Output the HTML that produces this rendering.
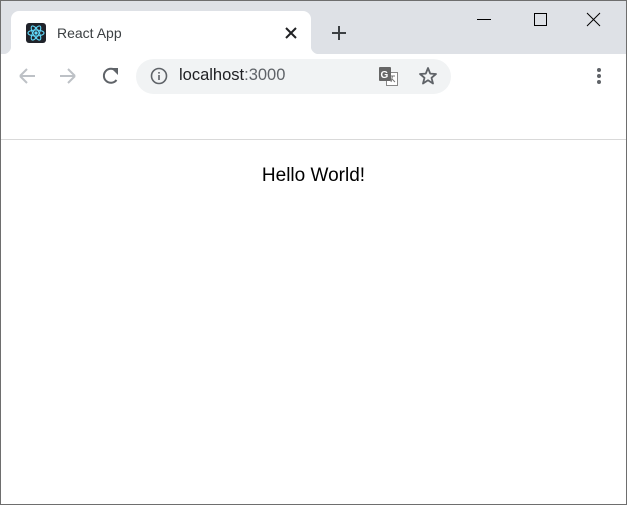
<!DOCTYPE html>
<html><head><style>
*{margin:0;padding:0;box-sizing:border-box}
body{width:627px;height:505px;overflow:hidden;background:#fff;font-family:"Liberation Sans","DejaVu Sans",sans-serif;position:relative}
.frame{position:absolute;left:0;top:0;width:627px;height:505px;border:1px solid #6e6e6e;pointer-events:none}
.top{position:absolute;left:0;top:0;width:627px;height:54px;background:#dee1e6}
.tab{position:absolute;left:11px;top:11px;width:300px;height:43px;background:#fff;border-radius:8px 8px 0 0}
.tab:before,.tab:after{content:"";position:absolute;bottom:0;width:8px;height:8px}
.tab:before{left:-8px;background:radial-gradient(circle at 0 0,#dee1e6 8px,#fff 8.5px)}
.tab:after{right:-8px;background:radial-gradient(circle at 100% 0,#dee1e6 8px,#fff 8.5px)}
.title{position:absolute;left:57px;top:25px;font-size:14px;color:#3c4043}
.addr{position:absolute;left:136px;top:59px;width:315px;height:35px;background:#f1f3f4;border-radius:18px}
.url{position:absolute;left:179px;top:66px;font-size:16.5px;color:#202124}
.url span{color:#5f6368}
.sep{position:absolute;left:0;top:139px;width:627px;height:1px;background:#d9d9d9}
.hello{position:absolute;left:0;width:627px;top:165px;text-align:center;font-size:19px;color:#000}
svg{position:absolute}
</style></head><body>
<div class="top"></div>
<div class="tab"></div>
<svg style="left:26px;top:23px" width="20" height="20" viewBox="0 0 20 20"><rect width="20" height="20" rx="3" fill="#20232a"/><g fill="none" stroke="#61dafb" stroke-width="1.1"><ellipse cx="10" cy="10" rx="8" ry="3"/><ellipse cx="10" cy="10" rx="8" ry="3" transform="rotate(60 10 10)"/><ellipse cx="10" cy="10" rx="8" ry="3" transform="rotate(120 10 10)"/></g><circle cx="10" cy="10" r="1.6" fill="#61dafb"/></svg>
<div class="title">React App</div>
<svg style="left:285px;top:27px" width="12" height="12"><path d="M1 1L11 11M11 1L1 11" stroke="#202124" stroke-width="2"/></svg>
<svg style="left:331px;top:25px" width="16" height="16"><path d="M8 1V15M1 8H15" stroke="#3c4043" stroke-width="2"/></svg>
<svg style="left:476px;top:12px" width="130" height="16"><path d="M1 7.5H15" stroke="#000"/><rect x="58.5" y="1.5" width="12" height="12" fill="none" stroke="#000"/><path d="M111 1L124 14M124 1L111 14" stroke="#000"/></svg>
<svg style="left:17px;top:66px" width="110" height="20"><path d="M3 10H18M3 10L10 3M3 10L10 17" fill="none" stroke="#bdc1c6" stroke-width="2"/><path d="M43 10H58M58 10L51 3M58 10L51 17" fill="none" stroke="#bdc1c6" stroke-width="2"/><path d="M99 5A7 7 0 1 0 99.5 14" fill="none" stroke="#5f6368" stroke-width="2"/><path d="M94 2L101 2L101 9Z" fill="#5f6368"/></svg>
<div class="addr"></div>
<svg style="left:150px;top:67px" width="18" height="18"><circle cx="9" cy="9" r="7.5" fill="none" stroke="#5f6368" stroke-width="1.6"/><rect x="8.2" y="8" width="1.6" height="5" fill="#5f6368"/><rect x="8.2" y="5" width="1.6" height="1.6" fill="#5f6368"/></svg>
<div class="url">localhost<span>:3000</span></div>
<svg style="left:378px;top:66px" width="22" height="22"><rect x="8.5" y="6.5" width="11" height="13" fill="#fff" stroke="#888"/><path d="M12 10H17M14.5 10L13 16M14 13L17 16" stroke="#777" fill="none"/><rect x="1" y="1" width="12" height="14" rx="1" fill="#666"/><text x="2.5" y="12" font-size="10" font-weight="bold" fill="#fff" font-family="Liberation Sans">G</text></svg>
<svg style="left:418px;top:66px" width="20" height="20"><path d="M10 2L12.2 7.6L18 8L13.5 11.8L15 17.5L10 14.3L5 17.5L6.5 11.8L2 8L7.8 7.6Z" fill="none" stroke="#5f6368" stroke-width="1.8" stroke-linejoin="round"/></svg>
<svg style="left:595px;top:67px" width="8" height="18"><circle cx="4" cy="3" r="2" fill="#5f6368"/><circle cx="4" cy="9" r="2" fill="#5f6368"/><circle cx="4" cy="15" r="2" fill="#5f6368"/></svg>
<div class="sep"></div>
<div class="hello">Hello World!</div>
<div class="frame"></div>
</body></html>
